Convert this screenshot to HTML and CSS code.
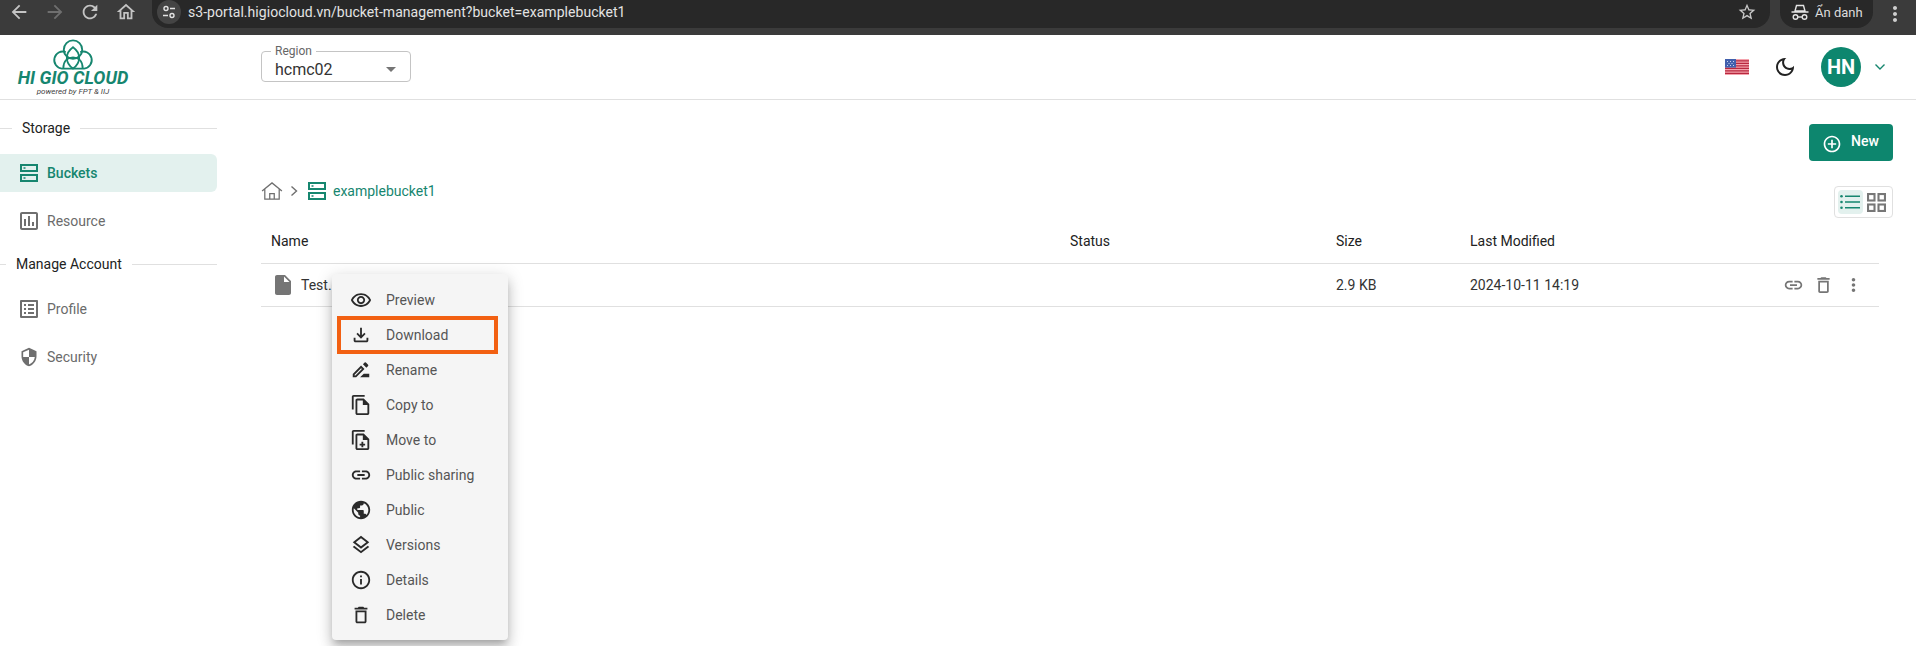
FILE: index.html
```html
<!DOCTYPE html>
<html lang="en">
<head>
	<meta charset="UTF-8">
	<title>Bucket management</title>
	<link rel="stylesheet" href="styles.css">
</head>
<body>
	<svg class="sprite" xmlns="http://www.w3.org/2000/svg">
		<symbol id="i-back" viewBox="0 0 24 24"><path d="M20 11H7.83l5.59-5.59L12 4l-8 8 8 8 1.41-1.41L7.83 13H20v-2z"/></symbol>
		<symbol id="i-forward" viewBox="0 0 24 24"><path d="M12 4l-1.41 1.41L16.17 11H4v2h12.17l-5.58 5.59L12 20l8-8z"/></symbol>
		<symbol id="i-reload" viewBox="0 0 24 24"><path d="M17.65 6.35C16.2 4.9 14.21 4 12 4c-4.42 0-7.99 3.58-7.99 8s3.57 8 7.99 8c3.73 0 6.84-2.55 7.73-6h-2.08c-.82 2.33-3.04 4-5.65 4-3.31 0-6-2.69-6-6s2.69-6 6-6c1.66 0 3.14.69 4.22 1.78L13 11h7V4l-2.35 2.35z"/></symbol>
		<symbol id="i-home" viewBox="0 0 24 24"><path d="M12 5.69l5 4.5V18h-2v-6H9v6H7v-7.81l5-4.5M12 3L2 12h3v8h6v-6h2v6h6v-8h3L12 3z"/></symbol>
		<symbol id="i-star" viewBox="0 0 24 24"><path d="M22 9.24l-7.19-.62L12 2 9.19 8.63 2 9.24l5.46 4.73L5.82 21 12 17.27 18.18 21l-1.63-7.03L22 9.24zM12 15.4l-3.76 2.27 1-4.28-3.32-2.88 4.38-.38L12 6.1l1.71 4.04 4.38.38-3.32 2.88 1 4.28L12 15.4z"/></symbol>
		<symbol id="i-more" viewBox="0 0 24 24"><path d="M12 8c1.1 0 2-.9 2-2s-.9-2-2-2-2 .9-2 2 .9 2 2 2zm0 2c-1.1 0-2 .9-2 2s.9 2 2 2 2-.9 2-2-.9-2-2-2zm0 6c-1.1 0-2 .9-2 2s.9 2 2 2 2-.9 2-2-.9-2-2-2z"/></symbol>
		<symbol id="i-eye" viewBox="0 0 24 24"><path d="M12 6.5c3.79 0 7.17 2.13 8.82 5.5-1.65 3.37-5.02 5.5-8.82 5.5S4.83 15.37 3.18 12C4.83 8.63 8.21 6.5 12 6.5m0-2C7 4.5 2.73 7.61 1 12c1.73 4.39 6 7.5 11 7.5s9.27-3.11 11-7.5c-1.73-4.39-6-7.5-11-7.5zm0 5c1.38 0 2.5 1.12 2.5 2.5s-1.12 2.5-2.5 2.5-2.5-1.12-2.5-2.5 1.12-2.5 2.5-2.5m0-2c-2.48 0-4.5 2.02-4.5 4.5s2.02 4.5 4.5 4.5 4.5-2.02 4.5-4.5-2.02-4.5-4.5-4.5z"/></symbol>
		<symbol id="i-download" viewBox="0 0 24 24"><path d="M18 15v3H6v-3H4v3c0 1.1.9 2 2 2h12c1.1 0 2-.9 2-2v-3h-2zm-1-4l-1.41-1.41L13 12.17V4h-2v8.17L8.41 9.59 7 11l5 5 5-5z"/></symbol>
		<symbol id="i-rename" viewBox="0 0 24 24"><path d="M15 16l-4 4h10v-4h-6zm-2.94-8.81L3 16.25V20h3.75l9.06-9.06-3.75-3.75zM5.92 18H5v-.92l7.06-7.06.92.92L5.92 18zm13.79-10.37c.39-.39.39-1.02 0-1.41l-2.34-2.34a.9959.9959 0 0 0-1.41 0l-1.83 1.83 3.75 3.75 1.83-1.83z"/></symbol>
		<symbol id="i-copy" viewBox="0 0 24 24"><path d="M16 1H4c-1.1 0-2 .9-2 2v14h2V3h12V1zm-1 4H8c-1.1 0-1.99.9-1.99 2L6 21c0 1.1.89 2 1.99 2H19c1.1 0 2-.9 2-2V11l-6-6zM8 21V7h6v5h5v9H8z"/></symbol>
		<symbol id="i-move" viewBox="0 0 24 24"><path d="M16 1H4c-1.1 0-2 .9-2 2v14h2V3h12V1zm-1 4H8c-1.1 0-1.99.9-1.99 2L6 21c0 1.1.89 2 1.99 2H19c1.1 0 2-.9 2-2V11l-6-6zM8 21V7h6v5h5v9H8zm4.5-7h2v2h2v2h-2v2h-2v-2h-2v-2h2z"/></symbol>
		<symbol id="i-link" viewBox="0 0 24 24"><path d="M17 7h-4v2h4c1.65 0 3 1.35 3 3s-1.35 3-3 3h-4v2h4c2.76 0 5-2.24 5-5s-2.24-5-5-5zm-6 8H7c-1.65 0-3-1.35-3-3s1.35-3 3-3h4V7H7c-2.76 0-5 2.24-5 5s2.24 5 5 5h4v-2zm-3-4h8v2H8z"/></symbol>
		<symbol id="i-public" viewBox="0 0 24 24"><path d="M12 2C6.48 2 2 6.48 2 12s4.48 10 10 10 10-4.48 10-10S17.52 2 12 2zm-1 17.93c-3.95-.49-7-3.85-7-7.93 0-.62.08-1.21.21-1.79L9 15v1c0 1.1.9 2 2 2v1.93zm6.9-2.54c-.26-.81-1-1.39-1.9-1.39h-1v-3c0-.55-.45-1-1-1H8v-2h2c.55 0 1-.45 1-1V7h2c1.1 0 2-.9 2-2v-.41c2.93 1.19 5 4.06 5 7.41 0 2.08-.8 3.97-2.1 5.39z"/></symbol>
		<symbol id="i-layers" viewBox="0 0 24 24"><path d="M11.99 18.54l-7.37-5.73L3 14.07l9 7 9-7-1.63-1.27-7.38 5.74zM12 16l7.36-5.73L21 9l-9-7-9 7 1.63 1.27L12 16zm0-11.47L17.74 9 12 13.47 6.26 9 12 4.53z"/></symbol>
		<symbol id="i-info" viewBox="0 0 24 24"><path d="M11 7h2v2h-2zm0 4h2v6h-2zm1-9C6.48 2 2 6.48 2 12s4.48 10 10 10 10-4.48 10-10S17.52 2 12 2zm0 18c-4.41 0-8-3.59-8-8s3.59-8 8-8 8 3.59 8 8-3.59 8-8 8z"/></symbol>
		<symbol id="i-delete" viewBox="0 0 24 24"><path d="M16 9v10H8V9h8m-1.5-6h-5l-1 1H5v2h14V4h-3.5l-1-1zM18 7H6v12c0 1.1.9 2 2 2h8c1.1 0 2-.9 2-2V7z"/></symbol>
		<symbol id="i-file" viewBox="0 0 24 24"><path d="M6 2c-1.1 0-1.99.9-1.99 2L4 20c0 1.1.89 2 1.99 2H18c1.1 0 2-.9 2-2V8l-6-6H6zm7 7V3.5L18.5 9H13z"/></symbol>
		<symbol id="i-storage" viewBox="0 0 20 20"><path fill-rule="evenodd" d="M1 1h18v8H1zm2 2v4h14V3zM1 11h18v8H1zm2 2v4h14v-4z"/><path d="M4.5 4.2h2v1.6h-2zM4.5 14.2h2v1.6h-2z"/></symbol>
		<symbol id="i-chart" viewBox="0 0 24 24"><path d="M19 3H5c-1.1 0-2 .9-2 2v14c0 1.1.9 2 2 2h14c1.1 0 2-.9 2-2V5c0-1.1-.9-2-2-2zm0 16H5V5h14v14zM7 10h2v7H7zm4-3h2v10h-2zm4 6h2v4h-2z"/></symbol>
		<symbol id="i-profile" viewBox="0 0 24 24"><path d="M19 5v14H5V5h14m1.1-2H3.9c-.5 0-.9.4-.9.9v16.2c0 .4.4.9.9.9h16.2c.4 0 .9-.5.9-.9V3.9c0-.5-.5-.9-.9-.9zM11 7h6v2h-6V7zm0 4h6v2h-6v-2zm0 4h6v2h-6zM7 7h2v2H7zm0 4h2v2H7zm0 4h2v2H7z"/></symbol>
		<symbol id="i-shield" viewBox="0 0 24 24"><path d="M12 1L3 5v6c0 5.55 3.84 10.74 9 12 5.16-1.26 9-6.45 9-12V5l-9-4zm0 10.99h7c-.53 4.12-3.28 7.79-7 8.94V12H5V6.3l7-3.11v8.8z"/></symbol>
		<symbol id="i-moon" viewBox="0 0 24 24"><path d="M9.37 5.51c-.18.64-.27 1.31-.27 1.99 0 4.08 3.32 7.4 7.4 7.4.68 0 1.35-.09 1.99-.27C17.45 17.19 14.93 19 12 19c-3.86 0-7-3.14-7-7 0-2.93 1.81-5.45 4.37-6.49zM12 3c-4.97 0-9 4.03-9 9s4.03 9 9 9 9-4.03 9-9c0-.46-.04-.92-.1-1.36-.98 1.37-2.58 2.26-4.4 2.26-2.98 0-5.4-2.42-5.4-5.4 0-1.81.89-3.42 2.26-4.4-.44-.06-.9-.1-1.36-.1z"/></symbol>
		<symbol id="i-add" viewBox="0 0 24 24"><path d="M13 7h-2v4H7v2h4v4h2v-4h4v-2h-4V7zm-1-5C6.48 2 2 6.48 2 12s4.48 10 10 10 10-4.48 10-10S17.52 2 12 2zm0 18c-4.41 0-8-3.59-8-8s3.59-8 8-8 8 3.59 8 8-3.59 8-8 8z"/></symbol>
	</svg>

	<div class="browser-bar">
		<svg class="nav-icon"><use href="#i-back"/></svg>
		<svg class="nav-icon dim"><use href="#i-forward"/></svg>
		<svg class="nav-icon"><use href="#i-reload"/></svg>
		<svg class="nav-icon"><use href="#i-home"/></svg>
		<div class="url-pill">
			<span class="site-info">
				<svg viewBox="0 0 16 16" width="16" height="16" fill="none" stroke="#e3e3e3" stroke-width="1.4">
					<circle cx="5" cy="4.5" r="2"/><path d="M9 4.5h5M2 11.5h5"/><circle cx="11" cy="11.5" r="2"/>
				</svg>
			</span>
			<span class="url-text">s3-portal.higiocloud.vn/bucket-management?bucket=examplebucket1</span>
			<svg class="star"><use href="#i-star"/></svg>
		</div>
		<div class="incognito">
			<svg viewBox="0 0 20 20" width="20" height="20" fill="none" stroke="#e3e3e3" stroke-width="1.4">
				<path d="M6.500 3.500h7l1.500 5.500H5zM1.500 10h17"/>
				<circle cx="5.500" cy="15" r="2.300"/>
				<circle cx="14.500" cy="15" r="2.300"/>
				<path d="M7.800 15h4.400"/>
			</svg>
			<span>Ẩn danh</span>
		</div>
		<svg class="nav-icon last"><use href="#i-more"/></svg>
	</div>

	<header class="app-header">
		<div class="logo">
			<svg class="logo-mark" viewBox="0 0 42 32" fill="none" stroke="#16866f" stroke-width="1.9">
				<circle cx="21" cy="11" r="9.5"/>
				<path d="M13.5 13.5A8.8 8.8 0 1 0 9.5 30.5H32.5A8.8 8.8 0 1 0 28.5 13.5"/>
				<path d="M21 30.5C13 25 12 15 21 8.5C30 15 29 25 21 30.5z"/>
				<path d="M11 30.5C11 22 16 19 21 19C26 19 31 22 31 30.5"/>
			</svg>
			<div class="logo-name">HI GIO CLOUD</div>
			<div class="logo-sub">powered by FPT &amp; IIJ</div>
		</div>
		<fieldset class="region">
			<legend>Region</legend>
			<div class="region-value">
				<span>hcmc02</span>
				<i class="caret"></i>
			</div>
		</fieldset>
		<div class="header-right">
			<svg class="flag" viewBox="0 0 24 16">
				<rect width="24" height="16" fill="#f4a3ad"/>
				<path d="M0 1.2h24v1.2H0zM0 3.7h24v1.2H0zM0 6.2h24v1.2H0zM0 8.7h24v1.2H0zM0 11.2h24v1.2H0zM0 13.7h24v1.2H0z" fill="#b8283f"/>
				<rect width="11" height="8.6" fill="#4260ad"/>
				<path d="M2 2h1v1H2zM5 2h1v1H5zM8 2h1v1H8zM3.5 4h1v1h-1zM6.500 4h1v1h-1zM2 6h1v1H2zM5 6h1v1H5zM8 6h1v1H8z" fill="#c9d3ee"/>
			</svg>
			<svg class="moon"><use href="#i-moon"/></svg>
			<div class="avatar">HN</div>
			<svg class="chevron" viewBox="0 0 12 8" fill="none" stroke="#16866f" stroke-width="1.4"><path d="M1.500 1.500 6 6l4.500-4.500"/></svg>
		</div>
	</header>

	<div class="layout">
		<aside class="sidebar">
			<div class="side-title storage-title"><span>Storage</span></div>
			<a class="side-item active"><svg><use href="#i-storage"/></svg>Buckets</a>
			<a class="side-item"><svg class="big"><use href="#i-chart"/></svg>Resource</a>
			<div class="side-title account-title"><span>Manage Account</span></div>
			<a class="side-item"><svg class="big"><use href="#i-profile"/></svg>Profile</a>
			<a class="side-item"><svg><use href="#i-shield"/></svg>Security</a>
		</aside>

		<main class="main">
			<div class="actions-row">
				<button class="btn-new"><svg><use href="#i-add"/></svg><span>New</span></button>
			</div>
			<div class="toolbar">
				<div class="crumbs">
					<svg class="crumb-home" viewBox="0 0 24 20" fill="none" stroke="#6f6f6f" stroke-width="1.400">
						<path d="M1 10 12 1l11 9M4 8v11h16V8M9.500 19v-6h5v6"/>
					</svg>
					<svg class="crumb-sep" viewBox="0 0 8 12" fill="none" stroke="#6f6f6f" stroke-width="1.400"><path d="m1.500 1.500 5 4.500-5 4.500"/></svg>
					<svg class="crumb-bucket"><use href="#i-storage"/></svg>
					<span>examplebucket1</span>
				</div>
				<div class="view-toggle">
					<span class="view-btn active">
						<svg viewBox="0 0 20 16" width="20" height="16" fill="#16866f">
							<path d="M5 1.500h15v1.600H5zM5 7.200h15v1.600H5zM5 12.900h15v1.600H5z"/>
							<circle cx="1.500" cy="2.300" r="1.300"/><circle cx="1.500" cy="8" r="1.300"/><circle cx="1.500" cy="13.700" r="1.300"/>
						</svg>
					</span>
					<span class="view-btn">
						<svg viewBox="0 0 20 20" width="19" height="19" fill="none" stroke="#777" stroke-width="2.200">
							<rect x="1.100" y="1.100" width="6.800" height="6.800"/><rect x="12.100" y="1.100" width="6.800" height="6.800"/>
							<rect x="1.100" y="12.100" width="6.800" height="6.800"/><rect x="12.100" y="12.100" width="6.800" height="6.800"/>
						</svg>
					</span>
				</div>
			</div>

			<div class="table">
				<div class="table-row head">
					<div class="cell-name">Name</div>
					<div>Status</div>
					<div>Size</div>
					<div>Last Modified</div>
					<div></div>
				</div>
				<div class="table-row">
					<div class="cell-name"><svg class="file-icon"><use href="#i-file"/></svg>Test.</div>
					<div></div>
					<div>2.9 KB</div>
					<div>2024-10-11 14:19</div>
					<div class="row-actions">
						<svg><use href="#i-link"/></svg>
						<svg><use href="#i-delete"/></svg>
						<svg><use href="#i-more"/></svg>
					</div>
					<ul class="menu">
						<li><svg><use href="#i-eye"/></svg>Preview</li>
						<li class="marked"><svg><use href="#i-download"/></svg>Download</li>
						<li><svg><use href="#i-rename"/></svg>Rename</li>
						<li><svg><use href="#i-copy"/></svg>Copy to</li>
						<li><svg><use href="#i-move"/></svg>Move to</li>
						<li><svg><use href="#i-link"/></svg>Public sharing</li>
						<li><svg><use href="#i-public"/></svg>Public</li>
						<li><svg><use href="#i-layers"/></svg>Versions</li>
						<li><svg><use href="#i-info"/></svg>Details</li>
						<li><svg><use href="#i-delete"/></svg>Delete</li>
					</ul>
				</div>
			</div>
		</main>
	</div>
</body>
</html>
```

FILE: styles.css
```css
*{
	margin: 0;
	padding: 0;
	box-sizing: border-box;
}
ul,li{
	list-style: none;
}
html,body{
	height: 646px;
	overflow: hidden;
}
body{
	font-family: Roboto, "Liberation Sans", sans-serif;
	font-size: 14px;
	color: #333;
	background: #fff;
}
.sprite{
	display: none;
}

/* browser toolbar */
.browser-bar{
	display: flex;
	height: 35px;
	background: #3b3b3b;
	align-items: flex-start;
	padding-left: 8px;
}
.nav-icon{
	width: 22px;
	height: 22px;
	margin: 1px 13.500px 0 0;
	fill: #c4c4c4;
}
.nav-icon.dim{
	fill: #6f6f6f;
}
.nav-icon.last{
	margin: 2px 0 0 10px;
	width: 24px;
	height: 24px;
	fill: #cfcfcf;
}
.url-pill{
	display: flex;
	align-items: center;
	width: 1618px;
	height: 28px;
	margin-left: 2px;
	background: #282828;
	border-radius: 0 0 16px 16px;
	color: #e3e3e3;
	font-size: 14px;
	letter-spacing: .04px;
	padding-bottom: 4px;
}
.site-info{
	display: flex;
	align-items: center;
	justify-content: center;
	width: 24px;
	height: 24px;
	margin-left: 5px;
	border-radius: 50%;
	background: #444;
}
.url-text{
	margin-left: 7px;
	flex: 1;
}
.star{
	width: 20px;
	height: 20px;
	margin-right: 13px;
	fill: #c7c7c7;
}
.incognito{
	display: flex;
	align-items: center;
	gap: 5px;
	width: 93px;
	height: 28px;
	margin-left: 10px;
	padding: 0 0 4px 10px;
	background: #282828;
	border-radius: 0 0 16px 16px;
	color: #dcdcdc;
	font-size: 13px;
}

/* app header */
.app-header{
	display: flex;
	height: 65px;
	border-bottom: 1px solid #e0e0e0;
}
.logo{
	display: flex;
	flex-direction: column;
	align-items: center;
	width: 146px;
	padding: 4px 0 0 0;
}
.logo-mark{
	width: 42px;
	height: 31px;
}
.logo-name{
	font-size: 18px;
	line-height: 15px;
	font-weight: 700;
	font-style: italic;
	color: #16866f;
	white-space: nowrap;
}
.logo-sub{
	font-size: 8px;
	line-height: 9px;
	margin-top: 2px;
	font-style: italic;
	color: #444;
	white-space: nowrap;
}
.region{
	align-self: flex-start;
	width: 150px;
	height: 37px;
	margin: 10px 0 0 115px;
	padding: 0 14px 0 13px;
	border: 1px solid #c4c4c4;
	border-radius: 4px;
}
.region legend{
	padding: 0 4px;
	margin-left: -4px;
	font-size: 12px;
	line-height: 13px;
	color: #666;
}
.region-value{
	display: flex;
	align-items: center;
	justify-content: space-between;
	height: 22px;
	font-size: 16px;
	color: #333;
}
.caret{
	width: 0;
	height: 0;
	border-left: 5px solid transparent;
	border-right: 5px solid transparent;
	border-top: 5px solid #757575;
}
.header-right{
	display: flex;
	align-items: center;
	margin-left: auto;
	padding-right: 30px;
}
.flag{
	width: 24px;
	height: 16px;
}
.moon{
	width: 24px;
	height: 24px;
	margin-left: 24px;
	fill: #222;
}
.avatar{
	display: flex;
	align-items: center;
	justify-content: center;
	width: 40px;
	height: 40px;
	margin-left: 24px;
	border-radius: 50%;
	background: #0d866e;
	color: #fff;
	font-size: 20px;
	font-weight: 700;
}
.chevron{
	width: 12px;
	height: 8px;
	margin-left: 13px;
}

/* sidebar */
.layout{
	display: flex;
}
.sidebar{
	flex: none;
	width: 217px;
	padding-top: 18px;
}
.side-title{
	display: flex;
	align-items: center;
	height: 20px;
	color: #222;
}
.side-title::before,
.side-title::after{
	content: "";
	height: 1px;
	background: #e0e0e0;
}
.side-title::after{
	flex: 1;
	margin-left: 10px;
}
.side-title::before{
	margin-right: 10px;
}
.storage-title::before{
	width: 12px;
}
.account-title::before{
	width: 6px;
}
.account-title{
	margin-top: 14px;
}
.side-item{
	display: flex;
	align-items: center;
	gap: 8px;
	height: 38px;
	margin-top: 10px;
	padding-left: 19px;
	color: #6b6b6b;
}
.side-item svg{
	width: 20px;
	height: 20px;
	fill: #6f6f6f;
}
.side-item svg.big{
	width: 24px;
	height: 24px;
	margin: 0 -2px;
}
.side-item.active{
	margin-top: 16px;
	border-radius: 0 6px 6px 0;
	background: #e3f1ee;
	color: #16866f;
	font-weight: 500;
}
.side-item.active svg{
	fill: #16866f;
}
.account-title + .side-item{
	margin-top: 16px;
}

/* main area */
.main{
	flex: 1;
	padding: 24px 23px 0 44px;
}
.actions-row{
	display: flex;
	justify-content: flex-end;
}
.btn-new{
	display: flex;
	align-items: center;
	gap: 9px;
	width: 84px;
	height: 37px;
	padding: 0 0 0 13px;
	border: none;
	border-radius: 4px;
	background: #0d866e;
	color: #fff;
	font-family: inherit;
	font-size: 14px;
	font-weight: 500;
}
.btn-new svg{
	width: 20px;
	height: 20px;
	margin-top: 3px;
	fill: #fff;
}
.btn-new span{
	margin-top: -3px;
}
.toolbar{
	display: flex;
	justify-content: space-between;
	align-items: flex-start;
	margin-top: 19px;
}
.crumbs{
	display: flex;
	align-items: center;
	height: 22px;
	color: #16866f;
	font-size: 14px;
}
.crumb-home{
	width: 22px;
	height: 18px;
}
.crumb-sep{
	width: 8px;
	height: 12px;
	margin-left: 7px;
}
.crumb-bucket{
	width: 20px;
	height: 20px;
	margin: 0 6px 0 9px;
	fill: #16866f;
}
.view-toggle{
	display: flex;
	align-items: center;
	gap: 2px;
	width: 59px;
	height: 32px;
	margin-top: 6px;
	padding: 0 3px;
	border: 1px solid #e0e0e0;
	border-radius: 4px;
}
.view-btn{
	display: flex;
	align-items: center;
	justify-content: center;
	width: 26px;
	height: 24px;
	border-radius: 4px;
}
.view-btn.active{
	background: #e3f1ee;
}

/* file table */
.table{
	margin: 2px 14px 0 0;
}
.table-row{
	position: relative;
	display: grid;
	grid-template-columns: 809px 266px 134px 1fr 96px;
	align-items: center;
	height: 43px;
	border-bottom: 1px solid #e0e0e0;
	color: #333;
}
.table-row.head{
	height: 44px;
	padding-bottom: 2px;
	color: #222;
}
.cell-name{
	display: flex;
	align-items: center;
	gap: 6px;
	padding-left: 10px;
}
.file-icon{
	width: 24px;
	height: 24px;
	fill: #757575;
}
.row-actions{
	display: flex;
	justify-content: flex-end;
	gap: 9px;
	padding-right: 15px;
}
.row-actions svg{
	width: 22px;
	height: 22px;
	fill: #757575;
}

/* context menu over the row */
.menu{
	position: absolute;
	left: 71px;
	top: 10px;
	width: 176px;
	padding: 8px 0;
	border-radius: 4px;
	background: #f5f5f5;
	box-shadow: 0 5px 6px -3px rgba(0,0,0,.2), 0 9px 12px 1px rgba(0,0,0,.14), 0 3px 16px 2px rgba(0,0,0,.12);
}
.menu li{
	position: relative;
	display: flex;
	align-items: center;
	gap: 14px;
	height: 35px;
	padding-left: 18px;
	color: #555;
}
.menu svg{
	width: 22px;
	height: 22px;
	fill: #2a2a2a;
}
.menu .marked::after{
	content: "";
	position: absolute;
	left: 5px;
	right: 10px;
	top: -1px;
	bottom: -2px;
	border: 4px solid #f26012;
}
```
